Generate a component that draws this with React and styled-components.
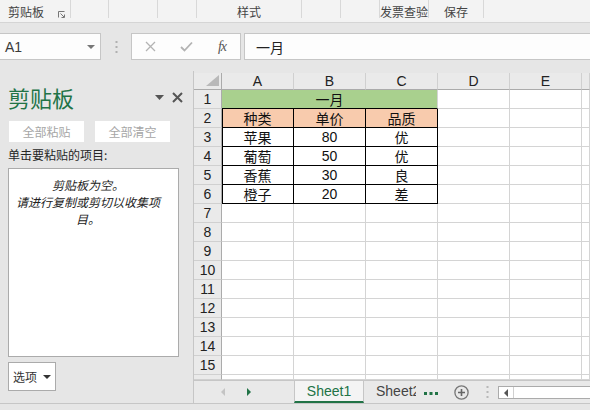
import React from "react";
import styled, { createGlobalStyle } from "styled-components";

const GlobalStyle = createGlobalStyle`
  html, body { margin: 0; padding: 0; }
  body {
    width: 590px; height: 410px; overflow: hidden;
    background: #e6e6e6;
    font-family: "Noto Sans CJK SC", "Noto Sans", sans-serif;
  }
`;

const CJK = `"Noto Sans CJK SC", sans-serif`;
const LATIN = `"Liberation Sans", "Noto Sans CJK SC", sans-serif`;
const GREEN = "#217346";

const Page = styled.div`
  width: 590px; height: 410px;
  display: flex; flex-direction: column;
  background: #e6e6e6;
`;

/* ---------- Ribbon ---------- */
const Ribbon = styled.div`
  height: 22px; flex: none;
  background: #f3f3f3;
  border-bottom: 1px solid #d5d5d5;
  display: flex; align-items: flex-start;
`;
const RibbonGroup = styled.div`
  box-sizing: border-box;
  width: ${p => (p.$w ? `${p.$w}px` : "auto")};
  flex: ${p => (p.$w ? "none" : "1")};
  height: 18px;
  border-right: ${p => (p.$last ? "none" : "1px solid #d8d8d8")};
  display: flex; align-items: center;
  justify-content: ${p => (p.$left ? "space-between" : "center")};
  padding: ${p => (p.$left ? "5px 5px 0 8px" : "5px 0 0 0")};
  font-size: 12px; color: #444;
  font-family: ${CJK};
  line-height: 13px;
`;

/* ---------- Formula bar ---------- */
const FormulaBar = styled.div`
  height: 48px; flex: none; box-sizing: border-box;
  padding-top: 10px;
  display: flex; align-items: flex-start;
`;
const NameBox = styled.div`
  box-sizing: border-box;
  width: 101px; height: 27px;
  background: #fdfdfd;
  border: 1px solid #c6c6c6; border-left: none;
  display: flex; align-items: center; justify-content: space-between;
  padding: 0 5px 0 5px;
  font-family: ${LATIN}; font-size: 14px; color: #3a3a3a;
`;
const Dots = styled.div`
  width: 30px; height: 27px;
  display: flex; align-items: center; justify-content: center;
`;
const FxBox = styled.div`
  box-sizing: border-box;
  width: 110px; height: 27px;
  background: #fdfdfd;
  border: 1px solid #c6c6c6;
  display: flex; align-items: center;
`;
const FxButton = styled.div`
  flex: 1; height: 100%;
  display: flex; align-items: center; justify-content: center;
`;
const FxLabel = styled.span`
  font-family: "Liberation Serif", serif;
  font-style: italic; font-size: 14px; color: #555;
  letter-spacing: -1px;
`;
const FormulaInput = styled.div`
  box-sizing: border-box;
  margin-left: 3px; flex: 1; height: 27px;
  background: #fdfdfd;
  border: 1px solid #c6c6c6; border-right: none;
  display: flex; align-items: center;
  padding-left: 11px;
  font-family: ${CJK}; font-size: 14px; color: #222;
`;

/* ---------- Main ---------- */
const Main = styled.div`
  flex: none; height: 332px; display: flex;
`;
const Panel = styled.div`
  width: 193px; flex: none; box-sizing: border-box;
  padding: 0 14px 0 8px;
  display: flex; flex-direction: column;
  & > * { flex: none; }
`;
const PanelHeader = styled.div`
  margin-top: 11px; height: 30px;
  display: flex; align-items: center; justify-content: space-between;
  margin-right: -4px;
`;
const PanelTitle = styled.div`
  font-family: ${CJK}; font-size: 22px; color: ${GREEN};
  line-height: 30px;
`;
const PanelControls = styled.div`
  display: flex; align-items: center; gap: 8px;
`;
const ButtonRow = styled.div`
  margin-top: 9px; padding-left: 1px;
  display: flex; gap: 11px;
`;
const PaneButton = styled.div`
  width: 75px; height: 21px;
  background: #fff;
  display: flex; align-items: center; justify-content: center;
  font-family: ${CJK}; font-size: 12px; color: #a6a6a6;
`;
const PaneLabel = styled.div`
  margin-top: 5px; line-height: 16px;
  font-family: ${CJK}; font-size: 12px; color: #262626;
`;
const ListBox = styled.div`
  margin-top: 5px; height: 189px; box-sizing: border-box;
  background: #fff; border: 1px solid #ababab;
  padding: 7px 16px 0 5px;
  font-family: ${CJK}; font-size: 12px; font-style: italic; color: #222;
  text-align: center; line-height: 17px;
`;
const OptionsButton = styled.div`
  margin-top: 5px; width: 48px; height: 29px; box-sizing: border-box;
  background: #fff; border: 1px solid #ababab;
  display: flex; align-items: center; gap: 6px;
  padding-left: 4px;
  font-family: ${CJK}; font-size: 12px; color: #333;
`;

/* ---------- Sheet ---------- */
const GridArea = styled.div`
  flex: 1; min-width: 0;
  border-left: 1px solid #c6c6c6;
  padding-top: 2px;
  display: flex; flex-direction: column;
  overflow: hidden;
`;
const Sheet = styled.div`
  flex: none;
  display: grid;
  grid-template-columns: 28px repeat(5, 72px) 1fr;
  grid-template-rows: 17px repeat(15, 19px) 5px;
  background: #fff;
`;
const Cell = styled.div`
  box-sizing: border-box;
  border-right: 1px solid ${p => (p.$br ? "#000" : "#d4d4d4")};
  border-bottom: 1px solid ${p => (p.$bb ? "#000" : "#d4d4d4")};
  box-shadow: ${p => (p.$bl ? "inset 1px 0 0 #000" : "none")};
  background: ${p => p.$bg || "#fff"};
  grid-column: ${p => p.$span ? `span ${p.$span}` : "auto"};
  display: flex; align-items: center; justify-content: center;
  font-family: ${LATIN}; font-size: 14px; color: #111;
  overflow: hidden; white-space: nowrap;
`;
const HeadCell = styled.div`
  box-sizing: border-box;
  background: #eaeaea;
  border-right: 1px solid #d0d0d0;
  border-bottom: 1px solid ${p => (p.$row ? "#d0d0d0" : "#ababab")};
  display: flex; align-items: center; justify-content: center;
  font-family: ${LATIN}; font-size: 14px; color: #222;
  overflow: hidden;
`;
const CornerCell = styled(HeadCell)`
  align-items: flex-end; justify-content: flex-end;
  padding: 0 2px 3px 0;
  border-right: 1px solid #ababab;
`;
const RowHead = styled(HeadCell)`
  border-right: 1px solid #ababab;
  font-size: 14px;
`;

/* ---------- Tabs ---------- */
const TabBar = styled.div`
  height: 23px; flex: none; box-sizing: border-box;
  border-top: 1px solid #c6c6c6;
  background: #e9e9e9;
  display: flex; align-items: stretch;
`;
const TabNav = styled.div`
  width: 100px; flex: none;
  display: flex; align-items: center;
  padding-left: 27px; gap: 22px; box-sizing: border-box;
`;
const Tab = styled.div`
  box-sizing: border-box;
  width: ${p => p.$w}px; flex: none;
  display: flex; align-items: center;
  justify-content: ${p => (p.$active ? "center" : "flex-start")};
  padding-left: ${p => (p.$active ? 0 : 12)}px;
  border-left: ${p => (p.$active ? "1px solid #c6c6c6" : "none")};
  border-right: ${p => (p.$active ? "1px solid #c6c6c6" : "none")};
  border-bottom: ${p => (p.$active ? `2px solid ${GREEN}` : "2px solid transparent")};
  background: ${p => (p.$active ? "#f4f4f4" : "transparent")};
  color: ${p => (p.$active ? GREEN : "#444")};
  font-family: ${LATIN}; font-size: 14px;
  overflow: hidden; white-space: nowrap;
`;
const More = styled.div`
  width: 30px; flex: none;
  display: flex; align-items: center; justify-content: center;
  padding-top: 2px;
`;
const AddSheet = styled.div`
  width: 30px; flex: none;
  display: flex; align-items: center; justify-content: center;
`;
const VDots = styled.div`
  width: 22px; flex: none;
  display: flex; align-items: center; justify-content: center;
`;
const HScroll = styled.div`
  flex: 1; margin: 5px 0 4px 0;
  box-sizing: border-box;
  border: 1px solid #ababab; border-right: none;
  background: #fff;
  display: flex;
`;
const ScrollBtn = styled.div`
  width: 14px; border-right: 1px solid #d0d0d0;
  display: flex; align-items: center; justify-content: center;
`;
const StatusBar = styled.div`
  flex: 1; border-top: 1px solid #c6c6c6; background: #e6e6e6;
`;

/* ---------- icons ---------- */
const TriDown = ({ c = "#666", w = 8, h = 4 }) => (
  <svg width={w} height={h} viewBox={`0 0 ${w} ${h}`}><polygon points={`0,0 ${w},0 ${w / 2},${h}`} fill={c} /></svg>
);
const TriLeft = ({ c }) => (
  <svg width="4" height="8" viewBox="0 0 4 8"><polygon points="4,0 4,8 0,4" fill={c} /></svg>
);
const TriRight = ({ c }) => (
  <svg width="4" height="8" viewBox="0 0 4 8"><polygon points="0,0 0,8 4,4" fill={c} /></svg>
);
const Launcher = () => (
  <svg width="7" height="7" viewBox="0 0 7 7" style={{ marginTop: 6 }}>
    <path d="M0.5 6.5 V0.5 H6.5" stroke="#777" fill="none" />
    <path d="M2.5 2.5 L6 6 M3.5 6.5 H6.5 V3.5" stroke="#777" fill="none" />
  </svg>
);
const CloseX = () => (
  <svg width="11" height="11" viewBox="0 0 11 11"><path d="M1 1 L10 10 M10 1 L1 10" stroke="#555" strokeWidth="2" /></svg>
);
const ThinX = () => (
  <svg width="11" height="11" viewBox="0 0 11 11"><path d="M1 1 L10 10 M10 1 L1 10" stroke="#b3b3b3" strokeWidth="1.3" /></svg>
);
const Check = () => (
  <svg width="13" height="11" viewBox="0 0 13 11"><path d="M1 6 L4.5 9.5 L12 1.5" stroke="#b3b3b3" strokeWidth="1.8" fill="none" /></svg>
);
const VertDots = ({ c = "#b0b0b0" }) => (
  <svg width="3" height="12" viewBox="0 0 3 12">
    <rect x="0.5" y="0" width="2" height="2" fill={c} />
    <rect x="0.5" y="5" width="2" height="2" fill={c} />
    <rect x="0.5" y="10" width="2" height="2" fill={c} />
  </svg>
);
const CornerTri = () => (
  <svg width="13" height="11" viewBox="0 0 13 11"><polygon points="13,0 13,11 0,11" fill="#b9b9b9" /></svg>
);
const Ellipsis = () => (
  <svg width="14" height="3" viewBox="0 0 14 3">
    <rect x="0" y="0" width="3" height="3" fill={GREEN} />
    <rect x="5.5" y="0" width="3" height="3" fill={GREEN} />
    <rect x="11" y="0" width="3" height="3" fill={GREEN} />
  </svg>
);
const Plus = () => (
  <svg width="15" height="15" viewBox="0 0 15 15">
    <circle cx="7.5" cy="7.5" r="6.6" stroke="#777" strokeWidth="1.3" fill="none" />
    <path d="M7.5 4 V11 M4 7.5 H11" stroke="#666" strokeWidth="1.6" />
  </svg>
);

const ribbonGroups = [
  { w: 71, left: true, label: "剪贴板" },
  { w: 38 }, { w: 49 }, { w: 39 },
  { w: 105, label: "样式" },
  { w: 39 }, { w: 39 },
  { w: 49, label: "发票查验" },
  { w: 55, label: "保存" },
  { last: true },
];

const cols = ["A", "B", "C", "D", "E"];
const data = [
  ["种类", "单价", "品质"],
  ["苹果", "80", "优"],
  ["葡萄", "50", "优"],
  ["香蕉", "30", "良"],
  ["橙子", "20", "差"],
];

export default function App() {
  const rows = [];
  for (let r = 1; r <= 16; r++) {
    const cells = [];
    cells.push(<RowHead key="h" $row>{r <= 15 ? r : ""}</RowHead>);
    if (r === 1) {
      cells.push(<Cell key="m" $span={3} $bg="#a9d08e" $bb>一月</Cell>);
      cells.push(<Cell key="d" />, <Cell key="e" />, <Cell key="f" />);
    } else if (r >= 2 && r <= 6) {
      const row = data[r - 2];
      row.forEach((v, i) => (
        cells.push(
          <Cell key={i} $br $bb $bl={i === 0} $bg={r === 2 ? "#f8cbad" : undefined}>{v}</Cell>
        )
      ));
      cells.push(<Cell key="d" />, <Cell key="e" />, <Cell key="f" />);
    } else {
      for (let c = 0; c < 6; c++) cells.push(<Cell key={c} />);
    }
    rows.push(<React.Fragment key={r}>{cells}</React.Fragment>);
  }

  return (
    <Page>
      <GlobalStyle />
      <Ribbon>
        {ribbonGroups.map((g, i) => (
          <RibbonGroup key={i} $w={g.w} $left={g.left} $last={g.last}>
            {g.label}
            {g.left && <Launcher />}
          </RibbonGroup>
        ))}
      </Ribbon>

      <FormulaBar>
        <NameBox>
          A1
          <TriDown c="#777" w={8} h={4} />
        </NameBox>
        <Dots><VertDots /></Dots>
        <FxBox>
          <FxButton><ThinX /></FxButton>
          <FxButton><Check /></FxButton>
          <FxButton><FxLabel>fx</FxLabel></FxButton>
        </FxBox>
        <FormulaInput>一月</FormulaInput>
      </FormulaBar>

      <Main>
        <Panel>
          <PanelHeader>
            <PanelTitle>剪贴板</PanelTitle>
            <PanelControls>
              <TriDown c="#555" w={9} h={5} />
              <CloseX />
            </PanelControls>
          </PanelHeader>
          <ButtonRow>
            <PaneButton>全部粘贴</PaneButton>
            <PaneButton>全部清空</PaneButton>
          </ButtonRow>
          <PaneLabel>单击要粘贴的项目:</PaneLabel>
          <ListBox>
            剪贴板为空。<br />
            请进行复制或剪切以收集项目。
          </ListBox>
          <OptionsButton>
            选项
            <TriDown c="#333" w={8} h={4} />
          </OptionsButton>
        </Panel>

        <GridArea>
          <Sheet>
            <CornerCell><CornerTri /></CornerCell>
            {cols.map(c => <HeadCell key={c}>{c}</HeadCell>)}
            <HeadCell />
            {rows}
          </Sheet>
          <TabBar>
            <TabNav>
              <TriLeft c="#c4c4c4" />
              <TriRight c={GREEN} />
            </TabNav>
            <Tab $w={70} $active>Sheet1</Tab>
            <Tab $w={52}>Sheet2</Tab>
            <More><Ellipsis /></More>
            <AddSheet><Plus /></AddSheet>
            <VDots><VertDots c="#b8b8b8" /></VDots>
            <HScroll>
              <ScrollBtn><TriLeft c="#555" /></ScrollBtn>
            </HScroll>
          </TabBar>
        </GridArea>
      </Main>
      <StatusBar />
    </Page>
  );
}
